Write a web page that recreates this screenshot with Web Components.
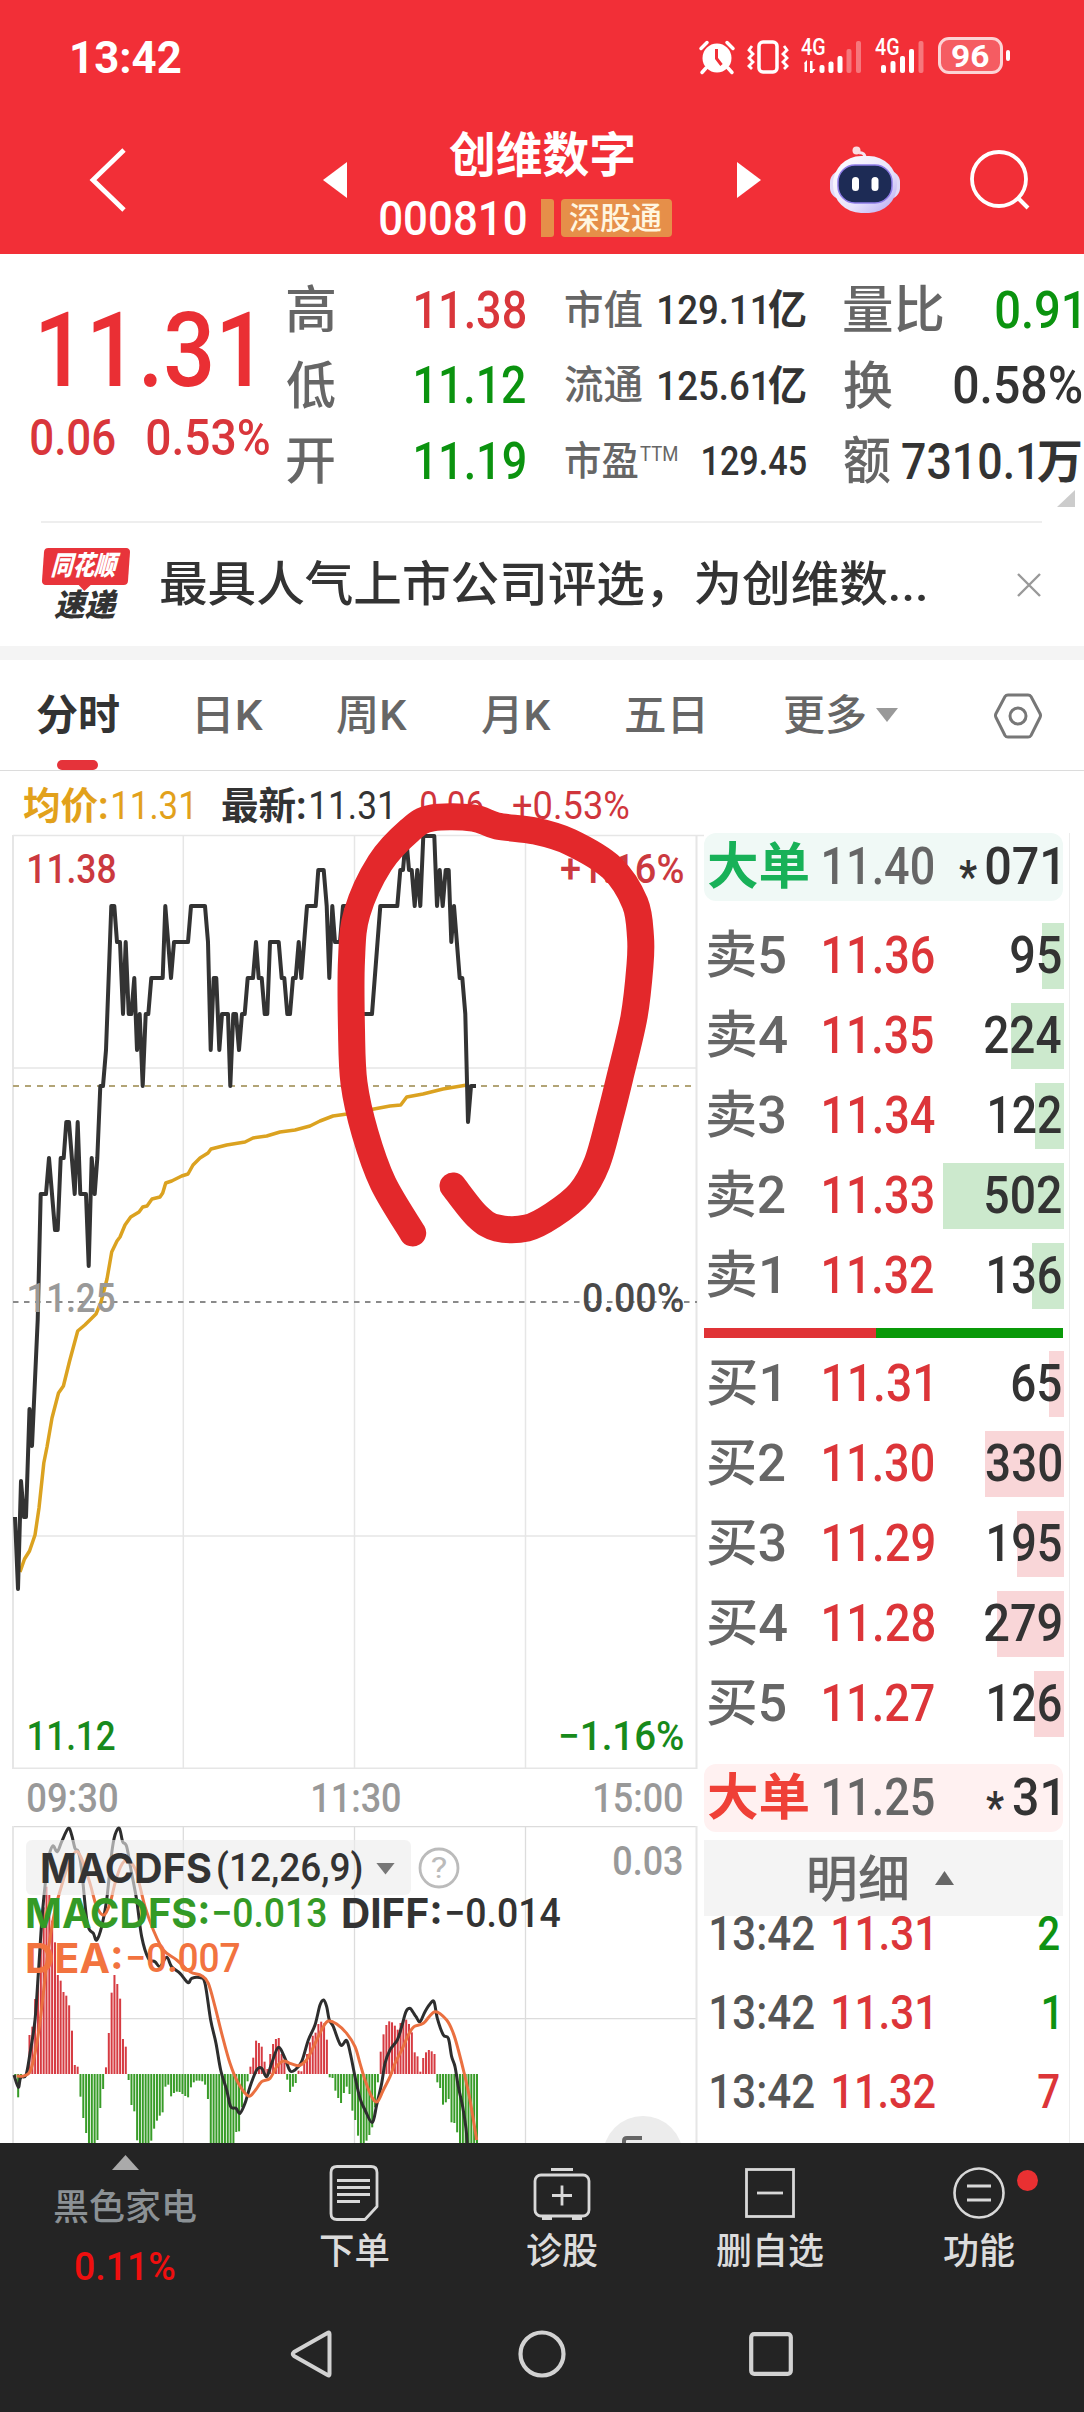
<!DOCTYPE html>
<html lang="zh-CN">
<head>
<meta charset="utf-8">
<title>创维数字 000810</title>
<style>
  html, body { margin: 0; padding: 0; }
  body { width: 1084px; height: 2412px; overflow: hidden; background: #fff; color: #333; font-family: Roboto, 'Noto Sans CJK SC', sans-serif; }
</style>
</head>
<body>
<stock-page>
  <status-bar></status-bar>
  <title-bar></title-bar>
  <quote-panel></quote-panel>
  <news-strip>最具人气上市公司评选，为创维数...</news-strip>
  <period-tabs></period-tabs>
  <price-summary></price-summary>
  <stock-board>
    <price-chart slot="chart"></price-chart>
    <time-axis slot="chart"></time-axis>
    <macd-chart slot="chart"></macd-chart>
    <order-book slot="book"></order-book>
  </stock-board>
  <tool-bar></tool-bar>
  <system-nav></system-nav>
  <pen-mark slot="over"></pen-mark>
</stock-page>

<script>
(function () {
  const ctx = document.createElement('canvas').getContext('2d');

  const el = (name, html, after) => customElements.define(name, class extends HTMLElement {
    connectedCallback() {
      if (this.shadowRoot) return;
      const root = this.attachShadow({ mode: 'open' });
      root.innerHTML = html;
      if (after) after(root, this);
    }
  });

  // one line of text, condensed or widened so its ink is exactly `w` pixels wide
  class FitText extends HTMLElement {
    connectedCallback() {
      if (this.shadowRoot) return;
      const root = this.attachShadow({ mode: 'open' });
      root.innerHTML = `
        <style>
          :host { display:block; flex:none; line-height:1; white-space:nowrap; }
          span { display:inline-block; transform-origin:0 50%; line-height:1; vertical-align:top; }
        </style>
        <span><slot></slot></span>`;
      const size = +this.getAttribute('size');
      const w = +this.getAttribute('w');
      this.style.fontSize = size + 'px';
      this.style.height = size + 'px';
      this.style.width = w + 'px';
      if (this.hasAttribute('ml')) this.style.marginLeft = this.getAttribute('ml') + 'px';
      const cs = getComputedStyle(this);
      ctx.font = `${cs.fontStyle} ${cs.fontWeight} ${size}px ${cs.fontFamily}`;
      const m = ctx.measureText(this.textContent.trim());
      const k = w / (m.actualBoundingBoxLeft + m.actualBoundingBoxRight);
      root.querySelector('span').style.transform = `translateX(${m.actualBoundingBoxLeft * k}px) scaleX(${k})`;
    }
  }
  customElements.define('fit-text', FitText);

  const ICONS = {
    alarm: [36, 34, `<circle cx="18" cy="18" r="14.500" fill="#fff"/><path d="M17.500 9v9.500l5 6.500" stroke="#f22f37" stroke-width="3" fill="none"/><path d="M2 8.500l6-6M34 8.500l-6-6M7 28l-4 4.500M29 28l4 4.500" stroke="#fff" stroke-width="3.500" stroke-linecap="round"/>`],
    vibrate: [42, 36, `<rect x="12" y="3" width="18" height="30" rx="4" fill="none" stroke="#fff" stroke-width="3.500"/><path d="M5 7l-3 4 4 4-4 4 4 4-4 4 3 3M37 7l3 4-4 4 4 4-4 4 4 4-3 3" fill="none" stroke="#fff" stroke-width="2.800"/>`],
    bars1: [62, 36, `<g fill="#fff"><path d="M3 24l3-3v12h-2.500v-8zM9 22h2.500v8h3l-3 4h-2.500z"/><rect x="18.500" y="26" width="5" height="8" rx="2"/><rect x="27.500" y="22.500" width="5" height="11.500" rx="2"/><rect x="36.500" y="17" width="5" height="17" rx="2"/><rect x="45.500" y="10" width="5" height="24" rx="2" opacity=".35"/><rect x="55" y="2" width="5" height="32" rx="2" opacity=".35"/></g>`],
    bars2: [50, 36, `<g fill="#fff"><rect x="6" y="26" width="5" height="8" rx="2"/><rect x="15.500" y="22" width="5" height="12" rx="2"/><rect x="25" y="17" width="5" height="17" rx="2"/><rect x="34" y="10" width="5" height="24" rx="2"/><rect x="43.500" y="2" width="5" height="32" rx="2" opacity=".35"/></g>`],
    back: [42, 68, `<path d="M36 4L5 34l31 30" fill="none" stroke="#fff" stroke-width="4.800"/>`],
    prev: [24, 36, `<path d="M0 18L24 0v36z" fill="#fff"/>`],
    next: [24, 36, `<path d="M24 18L0 0v36z" fill="#fff"/>`],
    robot: [72, 68, `<defs><linearGradient id="s" x1="0" y1="0" x2="1" y2="1"><stop offset="0" stop-color="#fff"/><stop offset=".6" stop-color="#e8e2fb"/><stop offset="1" stop-color="#b3a6f2"/></linearGradient></defs>
      <path d="M36 14c1-6-3-8-6-7" fill="none" stroke="#f6e4f0" stroke-width="3"/><circle cx="27.500" cy="4.500" r="4" fill="#fadde2"/>
      <rect x="1" y="25" width="70" height="28" rx="11" fill="#e0daf8"/><rect x="4" y="10" width="64" height="57" rx="28" fill="url(#s)"/>
      <rect x="9" y="19" width="54" height="38" rx="17" fill="#1d2b55" stroke="#8f7de8" stroke-width="1.500"/><rect x="23" y="31" width="7" height="14" rx="3.500" fill="#fff"/><rect x="42.500" y="31" width="7" height="14" rx="3.500" fill="#fff"/>`],
    search: [64, 64, `<circle cx="31" cy="31" r="27" fill="none" stroke="#fff" stroke-width="3.800"/><path d="M50 50l10 10" stroke="#fff" stroke-width="4"/>`],
    close: [24, 24, `<path d="M1 1l22 22M23 1L1 23" stroke="#999" stroke-width="2.400"/>`],
    down: [22, 14, `<path d="M0 0h22L11 14z" fill="#999"/>`],
    hex: [50, 48, `<path d="M15 3h20q2 0 3 1.500l9 17q1 2 0 4l-9 18q-1 1.500-3 1.500H15q-2 0-3-1.500l-9-18q-1-2 0-4l9-17Q13 3 15 3z" fill="none" stroke="#777" stroke-width="3"/><circle cx="25" cy="24" r="8" fill="none" stroke="#777" stroke-width="3"/>`],
    help: [42, 42, `<circle cx="21" cy="21" r="19" fill="none" stroke="#bbb" stroke-width="2.800"/>`],
    up: [27, 15, `<path d="M13.500 0L27 15H0z" fill="#aaa"/>`],
    order: [50, 56, `<path d="M8 1.500h34q6 0 6 6v34L36 54.500H8q-6 0-6-6v-41q0-6 6-6z" fill="none" stroke="#d8d8d8" stroke-width="2.800" stroke-linejoin="round"/><path d="M8 15.500h33M8 22.500h33M8 29.500h33M8 36.500h23" stroke="#d8d8d8" stroke-width="2.800"/>`],
    diagnose: [58, 54, `<rect x="2" y="9" width="54" height="41" rx="6" fill="none" stroke="#d8d8d8" stroke-width="2.800"/><path d="M18 3.500h22M29 19.500v20M19 29.500h20" stroke="#d8d8d8" stroke-width="2.800"/><path d="M9 51h10v3H9zM39 51h10v3H39z" fill="#d8d8d8"/>`],
    remove: [50, 50, `<rect x="1.500" y="1.500" width="47" height="47" fill="none" stroke="#d8d8d8" stroke-width="2.800"/><path d="M12 25h26" stroke="#d8d8d8" stroke-width="2.800"/>`],
    more: [52, 52, `<circle cx="26" cy="26" r="24.500" fill="none" stroke="#d8d8d8" stroke-width="2.600"/><path d="M14 19h24M14 33h24" stroke="#d8d8d8" stroke-width="3"/>`],
    navBack: [42, 50, `<path d="M37.500 4q2-1.500 2 1v40q0 2.500-2 1L4 27q-2.500-2 0-4z" fill="none" stroke="#d2d2d2" stroke-width="4" stroke-linejoin="round"/>`],
    navHome: [48, 48, `<circle cx="24" cy="24" r="21.500" fill="none" stroke="#d2d2d2" stroke-width="4.200"/>`],
    navTasks: [44, 44, `<rect x="2.200" y="2.200" width="39.600" height="39.600" rx="3" fill="none" stroke="#d2d2d2" stroke-width="4.200"/>`],
  };
  customElements.define('ui-icon', class extends HTMLElement {
    connectedCallback() {
      if (this.shadowRoot) return;
      const [w, h, body] = ICONS[this.getAttribute('name')];
      if (this.hasAttribute('ml')) this.style.marginLeft = this.getAttribute('ml') + 'px';
      this.attachShadow({ mode: 'open' }).innerHTML = `
        <style>:host { display:block; flex:none; width:${w}px; height:${h}px; } svg { display:block; overflow:visible; }</style>
        <svg width="${w}" height="${h}" viewBox="0 0 ${w} ${h}">${body}</svg>`;
    }
  });

  el('stock-page', `
    <style>:host { display:block; position:relative; width:1084px; height:2412px; overflow:hidden; background:#fff; }</style>
    <slot></slot><slot name="over"></slot>`);

  el('status-bar', `
    <style>
      :host { display:flex; align-items:center; height:114px; background:#f22f37; color:#fff; font-weight:700; }
      .net { position:relative; margin-left:12px; }
      .net fit-text { position:absolute; left:0; top:-3px; font-weight:500; }
      .batt { display:flex; align-items:center; justify-content:center; box-sizing:border-box; width:65px; height:37px; margin-left:13px; margin-top:-3px; border:3px solid #fcd3d5; border-radius:11px; background:rgba(255,255,255,.22); }
      i { width:4px; height:11px; margin-left:3px; margin-top:-3px; border-radius:2px; background:#fff; }
    </style>
    <fit-text size="45" w="109" ml="72">13:42</fit-text>
    <ui-icon name="alarm" ml="518"></ui-icon>
    <ui-icon name="vibrate" ml="12"></ui-icon>
    <div class="net"><ui-icon name="bars1"></ui-icon><fit-text size="23" w="24">4G</fit-text></div>
    <div class="net"><ui-icon name="bars2"></ui-icon><fit-text size="23" w="24">4G</fit-text></div>
    <div class="batt"><fit-text size="32" w="37">96</fit-text></div><i></i>`);

  el('title-bar', `
    <style>
      :host { display:flex; align-items:center; box-sizing:border-box; height:140px; padding-bottom:8px; background:#f22f37; color:#fff; }
      .name { display:flex; flex-direction:column; gap:19px; width:292px; margin-left:33px; padding-top:9px; }
      .name > fit-text { font-weight:700; }
      .code { display:flex; align-items:center; height:38px; font-weight:500; }
      i { width:13px; height:38px; margin-left:15px; background:#e68f49; border-radius:0 3px 3px 0; }
      .tag { display:flex; align-items:center; justify-content:center; width:112px; height:38px; margin-left:7px; background:#e68f49; border-radius:4px; color:#fff6e0; }
    </style>
    <ui-icon name="back" ml="88"></ui-icon>
    <ui-icon name="prev" ml="193"></ui-icon>
    <div class="name">
      <fit-text size="48" w="185" ml="69">创维数字</fit-text>
      <div class="code"><fit-text size="49" w="146">000810</fit-text><i></i><div class="tag"><fit-text size="31" w="92">深股通</fit-text></div></div>
    </div>
    <ui-icon name="next" ml="65"></ui-icon>
    <ui-icon name="robot" ml="68"></ui-icon>
    <ui-icon name="search" ml="67"></ui-icon>`);

  el('quote-panel', `
    <style>
      :host { display:grid; position:relative; box-sizing:border-box; height:267px; padding-top:19px; grid-template-columns:287px 238px 240px 240px; column-gap:0; color:#666; font-weight:500; }
      .col { display:grid; grid-auto-rows:75.500px; align-items:center; align-content:start; }
      .c3 { width:241px; margin-left:40px; } .c4 { width:237px; margin-left:79px; }
      .col > div { display:flex; align-items:center; justify-content:space-between; }
      .v { color:#333; } .r { color:#d9363b; } .g { color:#0b930f; }
      .big { display:flex; flex-direction:column; padding-top:26px; }
      .big .p { color:#ea2f34; }
      .chg { display:flex; margin-top:11px; }
      .num { display:flex; align-items:center; }
      sup { display:block; font-size:inherit; line-height:1; margin:-16px auto 0 2px; font-weight:400; }
      .cn { font-weight:700; }
      .corner { position:absolute; right:9px; bottom:14px; width:18px; height:17px; background:#ccc; clip-path:polygon(100% 0,100% 100%,0 100%); }
    </style>
    <div class="big">
      <fit-text class="p" size="103" w="209" ml="41">11.31</fit-text>
      <div class="chg"><fit-text class="r" size="50" w="84" ml="31">0.06</fit-text><fit-text class="r" size="50" w="122" ml="32">0.53%</fit-text></div>
    </div>
    <div class="col">
      <div><fit-text size="51" w="47">高</fit-text><fit-text class="r" size="52" w="109">11.38</fit-text></div>
      <div><fit-text size="51" w="48">低</fit-text><fit-text class="g" size="52" w="109">11.12</fit-text></div>
      <div><fit-text size="51" w="47">开</fit-text><fit-text class="g" size="52" w="109">11.19</fit-text></div>
    </div>
    <div class="col c3">
      <div><fit-text size="40" w="77">市值</fit-text><span class="num v"><fit-text size="41" w="105">129.11</fit-text><fit-text class="cn" size="41" w="38" ml="4">亿</fit-text></span></div>
      <div><fit-text size="40" w="77">流通</fit-text><span class="num v"><fit-text size="41" w="105">125.61</fit-text><fit-text class="cn" size="41" w="38" ml="4">亿</fit-text></span></div>
      <div><fit-text size="40" w="73">市盈</fit-text><sup><fit-text size="20" w="37">TTM</fit-text></sup><fit-text class="v" size="41" w="103">129.45</fit-text></div>
    </div>
    <div class="col c4">
      <div><fit-text size="51" w="99">量比</fit-text><fit-text class="g" size="52" w="83" style="margin-right:2px">0.91</fit-text></div>
      <div><fit-text size="51" w="48">换</fit-text><fit-text class="v" size="52" w="127">0.58%</fit-text></div>
      <div><fit-text size="51" w="46">额</fit-text><span class="num v"><fit-text size="50" w="130">7310.1</fit-text><fit-text class="cn" size="47" w="44" ml="5">万</fit-text></span></div>
    </div>
    <div class="corner"></div>`);

  el('news-strip', `
    <style>
      :host { display:block; height:125px; border-bottom:14px solid #f4f4f4; }
      .line { height:2px; margin:0 42px 0 41px; background:#eee; }
      .row { display:flex; align-items:center; height:123px; }
      .logo { display:flex; flex-direction:column; align-items:center; width:88px; margin-left:42px; font-weight:900; font-style:italic; }
      .badge { display:flex; align-items:center; justify-content:center; position:relative; width:86px; height:37px; background:#e8343b; border-radius:4px; transform:skewX(-4deg); color:#fff; }
      .badge::after { content:''; position:absolute; left:36px; top:36px; border:7px solid transparent; border-top-color:#e8343b; border-bottom:0; }
      .logo > fit-text { margin-top:5px; color:#333; }
      .text { font-weight:500; color:#333; padding-top:1px; }
    </style>
    <div class="line"></div>
    <div class="row">
      <div class="logo"><div class="badge"><fit-text size="27" w="68">同花顺</fit-text></div><fit-text size="31" w="64">速递</fit-text></div>
      <div class="text"></div>
      <ui-icon name="close" ml="92"></ui-icon>
    </div>`, (root, host) => {
    root.querySelector('.text').innerHTML = `<fit-text size="48" w="764" ml="31">${host.textContent}</fit-text>`;
  });

  el('period-tabs', `
    <style>
      :host { display:flex; align-items:center; box-sizing:border-box; height:111px; padding-top:2px; border-bottom:1px solid #dcdcdc; color:#666; font-weight:500; }
      .on { position:relative; color:#333; font-weight:700; }
      .on::after { content:''; position:absolute; left:57px; top:65px; width:41px; height:10px; border-radius:5px; background:#e5333a; }
      .tri { margin-top:-3px; }
    </style>
    <div class="on"><fit-text size="42" w="82" ml="37">分时</fit-text></div>
    <fit-text size="42" w="65" ml="79">日K</fit-text>
    <fit-text size="42" w="70" ml="74">周K</fit-text>
    <fit-text size="42" w="69" ml="75">月K</fit-text>
    <fit-text size="42" w="77" ml="75">五日</fit-text>
    <fit-text size="42" w="81" ml="81">更多</fit-text>
    <ui-icon class="tri" name="down" ml="11"></ui-icon>
    <ui-icon name="hex" ml="95"></ui-icon>`);

  el('price-summary', `
    <style>
      :host { display:flex; align-items:center; box-sizing:border-box; height:62px; padding-top:8px; }
      .r { color:#d0353c; }
      .b { font-weight:700; }
      .y { color:#e2a11b; }
    </style>
    <fit-text class="y b" size="38" w="84" ml="23">均价:</fit-text><fit-text class="y" size="38" w="78" ml="6">11.31</fit-text>
    <fit-text class="b" size="38" w="83" ml="31">最新:</fit-text><fit-text size="38" w="79" ml="6">11.31</fit-text>
    <fit-text class="r" size="38" w="62" ml="31">0.06</fit-text>
    <fit-text class="r" size="38" w="116" ml="30">+0.53%</fit-text>`);

  el('stock-board', `
    <style>
      :host { display:grid; grid-template-columns:704px 359px; height:1310px; overflow:hidden; }
      .book { border-right:1.500px solid #ececec; width:365px; }
    </style>
    <div><slot name="chart"></slot></div><div class="book"><slot name="book"></slot></div>`);

  // Catmull-Rom through the points, as a cubic path
  const smooth = (pts) => {
    let d = `M${pts[0]}`;
    for (let i = 0; i < pts.length - 1; i++) {
      const [a, b, c, e] = [pts[i - 1] || pts[i], pts[i], pts[i + 1], pts[i + 2] || pts[i + 1]];
      d += `C${b[0] + (c[0] - a[0]) / 6},${b[1] + (c[1] - a[1]) / 6} ${c[0] - (e[0] - b[0]) / 6},${c[1] - (e[1] - b[1]) / 6} ${c[0]},${c[1]}`;
    }
    return d;
  };
  const pairs = (s) => s.trim().split(/\s+/).map(p => p.split(',').map(Number));

  const PRICE = `15,1517 18,1589 21,1481 24,1517 26,1517 29.5,1409 32,1446 37.7,1320 40.7,1194 46,1194 49,1158 55,1230 57.7,1230 60.7,1158 63.7,1158 66.3,1122 69,1122 74.7,1194 77.7,1122 80.3,1194 86,1194 88.7,1266 91.7,1158 94.7,1194 97.3,1158 100.3,1086 103,1086 106,1050 111.3,906 114.3,906 117,942 120,942 123,1014 125.7,942 128.7,1014 131.3,1014 134.3,978 137,1050 139.7,1014 142.7,1086 145.7,1014 148.3,1014 151.3,978 162.7,978 165.3,906 171,978 174,942 188,942 191,906 205,906 208,942 210.7,1050 213.7,978 216.3,978 219.3,1050 222,1014 228,1014 230.3,1086 233.3,1014 236,1014 239,1050 242,1014 244.7,1014 247.7,978 253,978 256,942 258.7,978 261.7,978 264.7,1014 267.3,1014 270,942 278.7,942 281.7,978 284.3,978 287.3,1014 290,1014 293,978 295.7,978 298.7,942 301.3,978 307,906 315.7,906 318.3,870 323.7,870 326.7,906 329.3,978 332.3,906 335,942 340,942 343,906 349,906 358,1014 372,1014 380.3,906 397.3,906 400.3,870 403,870 406,836 409,870 411.7,870 414.7,906 417.3,870 420.3,906 423.3,836 434.3,836 437,906 439.7,870 442.7,906 445.7,870 448.7,870 451.3,942 454,906 459.7,978 462.3,978 465.3,1014 468,1122 471,1086 476,1086`;
  const AVG = `20,1572 24.5,1559 29.5,1551 35,1535 39,1508 43.8,1463 47,1447 52,1418 58.5,1393 63.4,1386 69.6,1361 77.7,1331 84.8,1325 96,1314 101,1302 107,1279 111.7,1252 117,1241 120,1237 125,1225 130.7,1217 139,1212 142.7,1207 147,1206 152,1199 160,1197 162.7,1193 165.7,1183 171.7,1181 181.7,1176 188,1174 193,1165 200,1158 208,1153 211,1149 226.7,1145 245,1142 253,1138 266.7,1136 280,1132 295,1130 310,1126 320,1121 333,1116 347,1114 374,1109 390,1106 400.7,1105 406.7,1097 423,1094 443,1089 467,1085`;

  el('price-chart', `
    <style>
      :host { display:block; position:relative; height:936px; }
      svg { display:block; }
      .labels { position:absolute; left:0; top:17px; width:683px; height:905px; display:grid; grid-template-rows:429px 438px 40px; font-weight:500; }
      .labels div { display:flex; justify-content:space-between; padding-left:29px; }
      .r { color:#cb393f; } .g { color:#178a1b; } .n { color:#999; } .z { color:#4a4a4a; }
    </style>
    <svg width="704" height="936" viewBox="0 833 704 936">
      <g fill="none" stroke="#e6e6e6" stroke-width="1.500">
        <path d="M13 835.500H704M13 1068H696.500M13 1536H696.500M13 1768.300H697M183.300 835V1768M354.500 835V1768M525.500 835V1768"/>
        <path d="M13 835V1769M696.500 835V1769" stroke-width="2"/>
      </g>
      <path d="M13 1302H697" stroke="#8a8a8a" stroke-width="1.800" stroke-dasharray="5.500 5.500"/>
      <path d="M13 1086H697" stroke="#b2a476" stroke-width="1.800" stroke-dasharray="6 6"/>
      <polyline points="${AVG}" fill="none" stroke="#dba220" stroke-width="3.500" stroke-linejoin="round"/>
      <polyline points="${PRICE}" fill="none" stroke="#333" stroke-width="4" stroke-linejoin="round"/>
    </svg>
    <div class="labels">
      <div class="r"><fit-text size="40" w="86">11.38</fit-text><fit-text size="40" w="122">+1.16%</fit-text></div>
      <div><fit-text class="n" size="40" w="86">11.25</fit-text><fit-text class="z" size="40" w="99">0.00%</fit-text></div>
      <div class="g"><fit-text size="40" w="86">11.12</fit-text><fit-text size="40" w="122">−1.16%</fit-text></div>
    </div>`);

  el('time-axis', `
    <style>:host { display:flex; align-items:center; box-sizing:border-box; height:57px; padding-top:3px; color:#999; font-weight:500; }</style>
    <fit-text size="40" w="89" ml="28">09:30</fit-text>
    <fit-text size="40" w="87" ml="196">11:30</fit-text>
    <fit-text size="40" w="87" ml="195">15:00</fit-text>`);

  // line points are in thirds of a pixel, relative to y 1800
  const third = (s) => pairs(s).map(([x, y]) => [x / 3, 1800 + y / 3]);
  const DIFF = `42,825 55,862 62,832 78,825 90,760 105,660 115,520 128,330 145,180 158,138 172,155 185,125 205,85 215,105 225,145 235,155 245,210 262,370 280,400 290,420 305,380 320,300 335,160 345,105 358,85 368,125 380,140 395,220 410,300 425,410 445,475 465,485 480,500 500,472 515,500 540,520 564,548 575,535 600,533 615,550 632,660 648,730 662,810 680,870 692,920 708,925 720,940 735,910 750,860 770,810 785,805 800,830 815,790 835,742 855,775 870,812 885,810 905,785 925,720 945,675 960,615 971,600 980,620 988,660 1000,680 1022,735 1040,722 1052,765 1065,830 1080,895 1095,930 1117,967 1130,915 1145,850 1155,790 1170,750 1192,720 1205,680 1218,635 1230,625 1238,635 1248,650 1260,665 1275,635 1290,612 1302,605 1312,655 1330,705 1345,715 1355,770 1365,800 1375,860 1388,920 1398,985 1402,1035`;
  const DEA = `50,828 70,828 90,815 105,760 118,680 130,580 145,450 165,330 190,240 210,180 232,155 250,190 270,250 290,320 312,345 330,310 345,250 362,200 380,180 405,205 420,260 435,320 460,390 490,450 530,480 570,515 605,527 625,550 645,620 665,700 690,790 715,850 745,888 765,872 785,845 810,835 830,800 850,783 870,790 895,797 915,785 930,762 950,720 970,680 985,663 1010,672 1040,700 1065,740 1080,790 1095,840 1115,890 1132,905 1150,870 1170,830 1185,790 1205,750 1225,705 1242,680 1270,670 1305,635 1340,660 1360,700 1375,750 1395,830 1410,900 1430,1020`;
  const BARS = [-10, -70, -15, 0, 0, 117, 142, 225, 300, 380, 500, 562, 537, 460, 395, 297, 280, 246, 235, 206, 130, 27, 22,
    -68, -132, -177, -210, -210, -210, -198, -102, -45, 20, 123, 244, 297, 270, 226, 105, 82,
    -18, -93, -112, -199, -210, -210, -210, -210, -200, -164, -140, -125, -115, -38, -32, -67, -57, -53, -54, -60, -66, -70, -40, -25, -20, -20, -22, -32, -75,
    -210, -210, -210, -210, -210, -210, -210, -210, -210, -174, -172, -100, -60, -22,
    22, 49, 100, 93, 82, 37, 15, 60, 90, 105, 108, 60, 35, -17, -54, -38, -27, 10, 8, 40, 60, 95, 115, 124, 150, 157, 152, 103,
    -10, -12, -50, -72, -87, -57, -38, -60, -110, -138, -185, -210, -210, -200, -183, -160, -100, -25,
    67, 119, 147, 158, 155, 145, 133, 153, 160, 163, 150, 125, 65, 53, 7, 48, 65, 72, 68, 60,
    -25, -42, -92, -85, -75, -145, -147, -175, -210, -210, -210, -210, -210, -210, -210];
  const STEP = 1385 / (BARS.length - 1);
  const bar = (v, i) => {
    const x = (46 + i * STEP) / 3 - 1;
    return `<rect x="${x.toFixed(2)}" y="${v > 0 ? 2074 - v / 3 : 2074}" width="2" height="${Math.abs(v) / 3}" fill="${v > 0 ? '#d63b42' : '#389c28'}"/>`;
  };

  el('macd-chart', `
    <style>
      :host { display:block; position:relative; height:317px; overflow:hidden; }
      svg { display:block; }
      .over { position:absolute; left:0; top:0; width:704px; }
      .head { display:flex; align-items:center; height:55px; margin:14px 0 0 26px; }
      .chip { display:flex; align-items:center; box-sizing:border-box; width:385px; height:55px; padding-top:2px; border-radius:6px; background:rgba(235,235,235,.62); font-weight:500; }
      .tri { width:19px; height:12px; margin-left:14px; background:#777; clip-path:polygon(0 0,100% 0,50% 100%); }
      .help { display:grid; place-items:center; margin-left:7px; color:#bbb; }
      .help > * { grid-area:1/1; }
      .row { display:flex; align-items:center; height:45px; padding-left:27px; font-weight:500; }
      .head + .row { margin-top:-4px; }
      .max { color:#999; margin-top:-12px; font-weight:500; }
      b { display:block; font-family:Inter, sans-serif; font-weight:700; }
      .g { color:#349a26; } .o { color:#f2733f; }
      .float { position:absolute; left:603px; top:290px; width:80px; height:80px; border-radius:50%; background:#ececec; }
    </style>
    <svg width="704" height="317" viewBox="0 1826 704 317">
      <path d="M13 1826.700H697M13 2018.700H697M183.300 1826V2143M354.500 1826V2143M525.500 1826V2143" fill="none" stroke="#dcdcdc" stroke-width="1.300"/>
      <path d="M13 1826V2143M696.500 1826V2143" stroke="#e6e6e6" stroke-width="2"/>
      ${BARS.map(bar).join('')}
      <path d="${smooth(third(DIFF))}" fill="none" stroke="#2e2e2e" stroke-width="3" stroke-linejoin="round"/>
      <path d="${smooth(third(DEA))}" fill="none" stroke="#ea7040" stroke-width="3"/>
    </svg>
    <div class="float"><svg width="80" height="27" viewBox="603 2116 80 27"><path d="M624 2146v-5q0-3 3-3h15" fill="none" stroke="#666" stroke-width="4"/></svg></div>
    <div class="over">
      <div class="head">
        <div class="chip"><b><fit-text size="41" w="169" ml="16">MACDFS</fit-text></b><fit-text size="39" w="144" ml="7">(12,26,9)</fit-text><i class="tri"></i></div>
        <div class="help"><ui-icon name="help"></ui-icon><fit-text size="30" w="14">?</fit-text></div>
        <fit-text class="max" size="40" w="68" ml="154">0.03</fit-text>
      </div>
      <div class="row"><b class="g"><fit-text size="41" w="181">MACDFS:</fit-text></b><fit-text class="g" size="40" w="112" ml="6">−0.013</fit-text><b><fit-text size="41" w="97" ml="17">DIFF:</fit-text></b><fit-text size="40" w="113" ml="7">−0.014</fit-text></div>
      <div class="row o"><b><fit-text size="41" w="94">DEA:</fit-text></b><fit-text size="40" w="112" ml="7">−0.007</fit-text></div>
    </div>`);

  // label, label width, price, price width, volume, volume width, depth
  const SELL = [['卖5', 77, '11.36', 110, '95', 50, 22], ['卖4', 79, '11.35', 109, '224', 76, 53], ['卖3', 77, '11.34', 111, '122', 71, 29], ['卖2', 77, '11.33', 109, '502', 75, 121], ['卖1', 71, '11.32', 109, '136', 72, 32]];
  const BUY = [['买1', 71, '11.31', 106, '65', 49, 15], ['买2', 77, '11.30', 109, '330', 75, 79], ['买3', 77, '11.29', 110, '195', 72, 47], ['买4', 79, '11.28', 110, '279', 76, 67], ['买5', 77, '11.27', 110, '126', 72, 30]];
  const TICKS = [['11.31', 97, '2', 21, 'g', 0], ['11.31', 97, '1', 13, 'g', 3], ['11.32', 102, '7', 21, 'r', 0]];
  const level = ([n, nw, p, pw, v, vw, d]) => `
    <div class="row lv" style="--d:${d}px"><div class="a"><fit-text size="51" w="${nw}">${n}</fit-text></div>
    <fit-text class="r" size="52" w="${pw}">${p}</fit-text><div class="v"><fit-text size="52" w="${vw}">${v}</fit-text></div></div>`;

  el('order-book', `
    <style>
      :host { display:block; width:359px; color:#333; font-weight:500; }
      .row { display:grid; grid-template-columns:115px 115px 126px; align-items:center; }
      .row .a { padding-left:4px; color:#666; font-weight:500; }
      .row .v { display:flex; justify-content:flex-end; }
      .levels { display:grid; gap:14px; }
      .lv { height:66px; box-sizing:border-box; padding:0 3px 1px 4px; grid-template-columns:116px 115px 122px; background:linear-gradient(var(--c),var(--c)) right/var(--d) 100% no-repeat; }
      .row.lv .a { padding:0; }
      .sell { --c:#cce9cd; margin-top:22px; } .buy { --c:#f9d6d8; margin-top:13px; }
      .big { height:68px; border-radius:12px; grid-template-columns:120px 115px 119px; padding-bottom:1px; box-sizing:border-box; }
      .big .a { font-weight:700; color:inherit; } .big .p { color:#666; }
      .big .v { color:#333; align-items:flex-start; height:52px; }
      .big .star { margin:14px 9px 0 0; font-weight:700; }
      .bs { background:#f0f9f6; color:#18b158; } .bb { background:#fff1f1; color:#ef4037; margin-top:27px; }
      .ratio { height:10px; margin-top:19px; background:linear-gradient(90deg,#e03336 172px,#099908 172px); }
      .head { display:flex; align-items:center; box-sizing:border-box; height:76px; margin-top:8px; padding:3px 0 0 105px; background:#f4f4f4; color:#666; }
      .head i { width:19px; height:14px; margin-left:28px; margin-top:-3px; background:#666; clip-path:polygon(50% 0,100% 100%,0 100%); }
      .ticks { margin-top:-22px; position:relative; }
      .tick { height:79px; grid-template-columns:129px 110px 116px; }
      .tick .a { padding-left:7px; color:#555; }
      .r { color:#dc3539; } .g { color:#0e9212; }
    </style>
    <div class="row big bs"><div class="a"><fit-text size="50" w="100">大单</fit-text></div><fit-text class="p" size="52" w="109">11.40</fit-text><div class="v"><fit-text class="star" size="44" w="18">*</fit-text><fit-text size="52" w="72">071</fit-text></div></div>
    <div class="levels sell">${SELL.map(level).join('')}</div>
    <div class="ratio"></div>
    <div class="levels buy">${BUY.map(level).join('')}</div>
    <div class="row big bb"><div class="a"><fit-text size="50" w="100">大单</fit-text></div><fit-text class="p" size="52" w="110">11.25</fit-text><div class="v"><fit-text class="star" size="44" w="18">*</fit-text><fit-text size="52" w="45">31</fit-text></div></div>
    <div class="head"><fit-text size="50" w="98">明细</fit-text><i></i></div>
    <div class="ticks">${TICKS.map(([p, pw, v, vw, c, mr]) => `
      <div class="row tick"><div class="a"><fit-text size="48" w="103">13:42</fit-text></div><fit-text class="r" size="48" w="${pw}">${p}</fit-text><div class="v ${c}" style="padding-right:${mr}px"><fit-text size="48" w="${vw}">${v}</fit-text></div></div>`).join('')}
    </div>`);

  el('tool-bar', `
    <style>
      :host { display:grid; box-sizing:border-box; height:157px; grid-template-columns:250px 208px 207px 210px 208px; background:#242424; color:#dcdcdc; font-weight:500; }
      .t { display:grid; justify-items:center; align-content:start; grid-template-rows:54px 36px; row-gap:14px; padding-top:23px; align-items:center; }
      .sector { display:flex; flex-direction:column; align-items:center; padding:12px 0 0 0; color:#8b9195; }
      .sector .w { margin-top:20px; } .sector .p { margin-top:22px; color:#ef0f0f; font-weight:500; }
      .fn { position:relative; }
      .fn::after { content:''; position:absolute; left:142px; top:27px; width:21px; height:21px; border-radius:50%; background:#e93032; }
    </style>
    <div class="sector"><ui-icon name="up"></ui-icon><fit-text class="w" size="36" w="142">黑色家电</fit-text><fit-text class="p" size="38" w="100">0.11%</fit-text></div>
    <div class="t"><ui-icon name="order"></ui-icon><fit-text size="36" w="69">下单</fit-text></div>
    <div class="t"><ui-icon name="diagnose"></ui-icon><fit-text size="36" w="70">诊股</fit-text></div>
    <div class="t"><ui-icon name="remove"></ui-icon><fit-text size="36" w="106">删自选</fit-text></div>
    <div class="t fn"><ui-icon name="more"></ui-icon><fit-text size="36" w="70">功能</fit-text></div>`);

  el('system-nav', `
    <style>:host { display:flex; align-items:center; box-sizing:border-box; height:112px; padding-bottom:4px; background:#242424; }</style>
    <ui-icon name="navBack" ml="290"></ui-icon>
    <ui-icon name="navHome" ml="186"></ui-icon>
    <ui-icon name="navTasks" ml="183"></ui-icon>`);

  const PEN = `412.7,1233 383,1183 365,1133 354,1083 351.5,1030 351.5,960 357,913 380,863 410,830 432,818 473,818 497,826 535,831 570,842 612,868 635,903 640.5,937 640,965 634,1017 620,1077 610,1117 597,1163 580,1193 553,1215 527,1228 497,1228 477,1216 453,1186`;
  el('pen-mark', `
    <style>:host { position:absolute; left:320px; top:780px; width:360px; height:490px; } svg { display:block; }</style>
    <svg width="360" height="490" viewBox="320 780 360 490"><path d="${smooth(pairs(PEN))}" fill="none" stroke="#e3282b" stroke-width="27" stroke-linecap="round" stroke-linejoin="round"/></svg>`);
})();
</script>
</body>
</html>
